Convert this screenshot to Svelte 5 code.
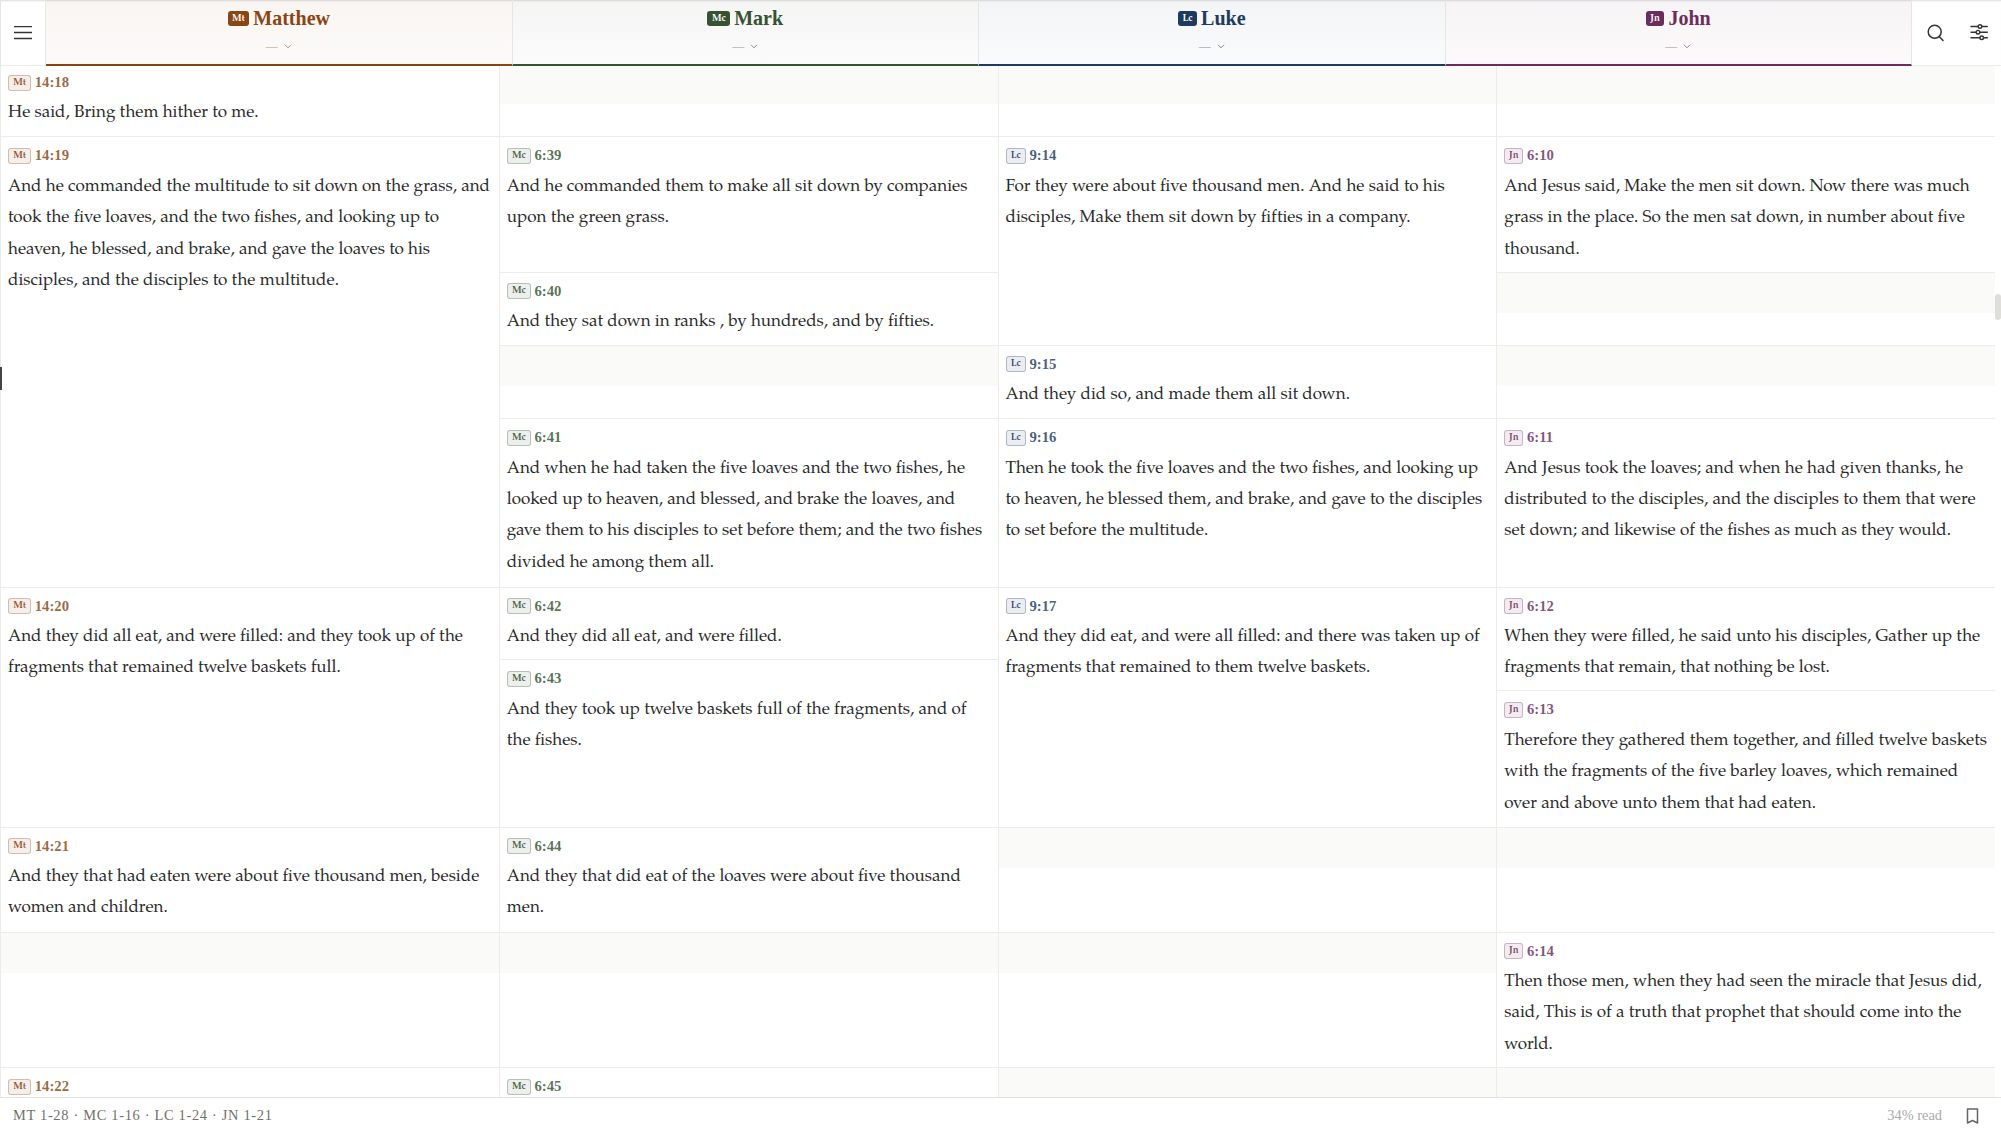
<script>
  const gospels = [
    { key: 'mt', name: 'Matthew', abbr: 'Mt' },
    { key: 'mc', name: 'Mark', abbr: 'Mc' },
    { key: 'lc', name: 'Luke', abbr: 'Lc' },
    { key: 'jn', name: 'John', abbr: 'Jn' }
  ];

  const rowHeights = [73.3, 135.7, 73, 73.3, 168.4, 72.6, 31.2, 136.2, 105, 135.6, 60];

  // col, row, span, ref, text. no ref = gap in that gospel
  const cells = [
    [0, 1, 1, '14:18', 'He said, Bring them hither to me.'],
    [1, 1, 1], [2, 1, 1], [3, 1, 1],

    [0, 2, 4, '14:19', 'And he commanded the multitude to sit down on the grass, and took the five loaves, and the two fishes, and looking up to heaven, he blessed, and brake, and gave the loaves to his disciples, and the disciples to the multitude.'],
    [1, 2, 1, '6:39', 'And he commanded them to make all sit down by companies upon the green grass.'],
    [1, 3, 1, '6:40', 'And they sat down in ranks , by hundreds, and by fifties.'],
    [1, 4, 1],
    [1, 5, 1, '6:41', 'And when he had taken the five loaves and the two fishes, he looked up to heaven, and blessed, and brake the loaves, and gave them to his disciples to set before them; and the two fishes divided he among them all.'],
    [2, 2, 2, '9:14', 'For they were about five thousand men. And he said to his disciples, Make them sit down by fifties in a company.'],
    [2, 4, 1, '9:15', 'And they did so, and made them all sit down.'],
    [2, 5, 1, '9:16', 'Then he took the five loaves and the two fishes, and looking up to heaven, he blessed them, and brake, and gave to the disciples to set before the multitude.'],
    [3, 2, 1, '6:10', 'And Jesus said, Make the men sit down. Now there was much grass in the place. So the men sat down, in number about five thousand.'],
    [3, 3, 1], [3, 4, 1],
    [3, 5, 1, '6:11', 'And Jesus took the loaves; and when he had given thanks, he distributed to the disciples, and the disciples to them that were set down; and likewise of the fishes as much as they would.'],

    [0, 6, 3, '14:20', 'And they did all eat, and were filled: and they took up of the fragments that remained twelve baskets full.'],
    [1, 6, 1, '6:42', 'And they did all eat, and were filled.'],
    [1, 7, 2, '6:43', 'And they took up twelve baskets full of the fragments, and of the fishes.'],
    [2, 6, 3, '9:17', 'And they did eat, and were all filled: and there was taken up of fragments that remained to them twelve baskets.'],
    [3, 6, 2, '6:12', 'When they were filled, he said unto his disciples, Gather up the fragments that remain, that nothing be lost.'],
    [3, 8, 1, '6:13', 'Therefore they gathered them together, and filled twelve baskets with the fragments of the five barley loaves, which remained over and above unto them that had eaten.'],

    [0, 9, 1, '14:21', 'And they that had eaten were about five thousand men, beside women and children.'],
    [1, 9, 1, '6:44', 'And they that did eat of the loaves were about five thousand men.'],
    [2, 9, 1], [3, 9, 1],

    [0, 10, 1], [1, 10, 1], [2, 10, 1],
    [3, 10, 1, '6:14', 'Then those men, when they had seen the miracle that Jesus did, said, This is of a truth that prophet that should come into the world.'],

    [0, 11, 1, '14:22', ''],
    [1, 11, 1, '6:45', ''],
    [2, 11, 1], [3, 11, 1]
  ];
</script>

<div class="app">
  <header class="top">
    <button class="icon-btn menu" aria-label="Menu">
      <svg width="18" height="14" viewBox="0 0 18 14" fill="none" stroke="#333" stroke-width="1.5">
        <path d="M0 .5h18M0 6.500h18M0 12.500h18" />
      </svg>
    </button>

    <div class="heads">
      {#each gospels as g}
        <div class="head {g.key}">
          <div class="title">
            <span class="tag">{g.abbr}</span>
            <span>{g.name}</span>
          </div>
          <div class="sub">
            <span>—</span>
            <svg width="8" height="5" viewBox="0 0 8 5" fill="none" stroke="currentColor" stroke-width="1">
              <path d="M1 .8l3 3 3-3" />
            </svg>
          </div>
        </div>
      {/each}
    </div>

    <div class="tools">
      <button class="icon-btn" aria-label="Search">
        <svg width="18" height="18" viewBox="0 0 18 18" fill="none" stroke="#333" stroke-width="1.5" stroke-linecap="round">
          <circle cx="8.700" cy="7.800" r="6.500" />
          <path d="M13.400 12.700l3.600 3.800" />
        </svg>
      </button>
      <button class="icon-btn" aria-label="Settings">
        <svg width="18" height="18" viewBox="0 0 18 18" fill="none" stroke="#333" stroke-width="1.400" stroke-linecap="round">
          <path d="M1 2.500h7M12 2.500h5.300M1 8.200h5M10 8.200h7.300M1 13.800h8.700M13.700 13.800h3.600" />
          <circle cx="10" cy="2.500" r="1.800" />
          <circle cx="8" cy="8.200" r="1.800" />
          <circle cx="11.700" cy="13.800" r="1.800" />
        </svg>
      </button>
    </div>
  </header>

  <main class="pane">
    <div class="grid" style="grid-template-rows: {rowHeights.map((h) => h + 'px').join(' ')}">
      {#each cells as [col, row, span, ref, text]}
        <div class="cell {gospels[col].key}" class:gap={!ref} style="grid-column: {col + 1}; grid-row: {row} / span {span}">
          {#if ref}
            <div class="ref">
              <span class="badge">{gospels[col].abbr}</span>
              <span class="num">{ref}</span>
            </div>
            {#if text}<p>{text}</p>{/if}
          {:else}
            <div class="shade"></div>
          {/if}
        </div>
      {/each}
    </div>
    <span class="handle"></span>
    <span class="thumb"></span>
  </main>

  <footer class="bottom">
    <span class="range">MT 1-28 · MC 1-16 · LC 1-24 · JN 1-21</span>
    <div class="progress">
      <span>34% read</span>
      <svg width="13" height="16" viewBox="0 0 13 16" fill="none" stroke="#666" stroke-width="1.500" stroke-linejoin="round">
        <path d="M1.500 1h10v14l-5-2.500-5 2.500z" />
      </svg>
    </div>
  </footer>
</div>

<style>
  :global(body) {
    background: #fff;
    font-family: "Liberation Serif", serif;
  }

  .app {
    --verse-font: "Palatino Linotype", Palatino, "Book Antiqua", P052, "URW Palladio L", "TeX Gyre Pagella", "Liberation Serif", serif;
    height: 100vh;
    display: flex;
    flex-direction: column;
    overflow: hidden;
  }

  .mt { --c: 139, 69, 19; }
  .mc { --c: 54, 82, 50; }
  .lc { --c: 30, 58, 95; }
  .jn { --c: 107, 45, 92; }

  .top {
    height: 66px;
    flex: none;
    display: flex;
    position: relative;
    z-index: 2;
    background: #fff;
    border-bottom: 1px solid #eeece8;
    box-sizing: border-box;
    box-shadow: inset 0 2px 2px -1px rgba(0, 0, 0, 0.14);
  }

  .icon-btn {
    background: none;
    border: none;
    padding: 0;
    display: flex;
    align-items: center;
    justify-content: center;
  }

  .menu {
    width: 46px;
    border-left: 1px solid #e8e6e2;
    border-right: 1px solid #e8e6e2;
    box-sizing: border-box;
  }

  .heads {
    flex: 1;
    display: grid;
    grid-template-columns: repeat(4, 1fr);
    height: 66px;
  }

  .head {
    box-sizing: border-box;
    height: 66px;
    border-bottom: 2px solid rgb(var(--c));
    border-right: 1px solid #e8e6e2;
    background: linear-gradient(to bottom, rgba(var(--c), 0.055), rgba(var(--c), 0.025));
    display: flex;
    flex-direction: column;
    align-items: center;
    padding-top: 6px;
  }

  .title {
    display: flex;
    align-items: center;
    gap: 4px;
    height: 24px;
    font-size: 20px;
    font-weight: 700;
    color: rgb(var(--c));
  }

  .tag {
    height: 15px;
    padding: 0 4.500px;
    box-sizing: border-box;
    border-radius: 3px;
    background: rgb(var(--c));
    color: #fff;
    font-family: var(--verse-font);
    font-size: 9.600px;
    line-height: 15px;
    text-align: center;
  }

  .sub {
    display: flex;
    align-items: center;
    gap: 6px;
    margin-top: 8px;
    height: 16px;
    font-size: 12px;
    color: rgba(var(--c), 0.6);
  }

  .tools {
    width: 89px;
    display: flex;
    padding-left: 14px;
    gap: 26px;
    box-sizing: border-box;
  }

  .pane {
    flex: 1;
    position: relative;
    overflow: hidden;
    padding-right: 6px;
  }

  .grid {
    display: grid;
    grid-template-columns: repeat(4, 1fr);
    margin-top: -3px;
  }

  .cell {
    box-sizing: border-box;
    border-top: 1px solid #eeece8;
    border-left: 1px solid #eeece8;
    padding: 10.500px 7px 0 7px;
    overflow: hidden;
  }

  .cell.gap {
    padding: 0;
  }

  .shade {
    height: 40px;
    background: #fafaf8;
  }

  .ref {
    display: flex;
    align-items: center;
    gap: 3.500px;
    height: 16px;
    margin-bottom: 7.800px;
  }

  .badge {
    height: 16px;
    padding: 0 4.200px;
    box-sizing: border-box;
    border-radius: 3px;
    border: 1px solid rgba(var(--c), 0.3);
    background: rgba(var(--c), 0.09);
    color: rgba(var(--c), 0.9);
    font-family: var(--verse-font);
    font-size: 9.600px;
    font-weight: 700;
    line-height: 13px;
    text-align: center;
  }

  .jn .badge {
    padding: 0 3.800px;
  }

  .num {
    font-size: 14.720px;
    font-weight: 700;
    color: rgba(var(--c), 0.82);
  }

  p {
    margin: 0;
    font-family: var(--verse-font);
    font-size: 17px;
    line-height: 31.450px;
    color: #2a2a2a;
  }

  .handle {
    position: absolute;
    left: 0;
    top: 301px;
    width: 1.500px;
    height: 23px;
    background: #444;
  }

  .thumb {
    position: absolute;
    right: 0;
    top: 228px;
    width: 6px;
    height: 26px;
    border-radius: 3px;
    background: #e0ded9;
  }

  .bottom {
    height: 36px;
    flex: none;
    box-sizing: border-box;
    border-top: 1px solid #e4e2de;
    background: #fff;
    position: relative;
    z-index: 2;
    display: flex;
    align-items: center;
    justify-content: space-between;
    padding: 0 22px 0 13px;
    font-size: 14.400px;
  }

  .range {
    color: #6f6f6f;
    letter-spacing: 0.048em;
  }

  .progress {
    display: flex;
    align-items: center;
    gap: 24px;
    color: #aaa;
  }
</style>
